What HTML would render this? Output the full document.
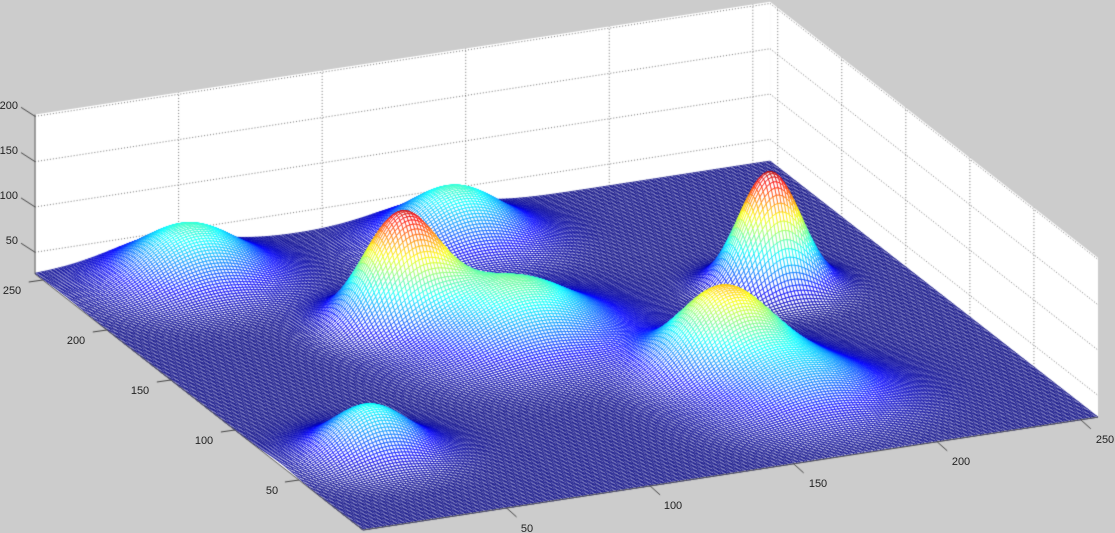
<!DOCTYPE html>
<html><head><meta charset="utf-8">
<style>
html,body{margin:0;padding:0;background:#cccccc;}
#w{position:relative;width:1115px;height:533px;overflow:hidden;background:#cccccc;}
canvas{position:absolute;left:0;top:0;}
.l{position:absolute;font:11px "Liberation Sans",Arial,sans-serif;color:#222;white-space:nowrap;transform:translate(-50%,-50%);}
.r{transform:translate(-100%,-50%);}
</style></head><body>
<div id="w">
<canvas id="c" width="1115" height="533"></canvas>
<div class="l r" style="left:18px;top:106px">200</div>
<div class="l r" style="left:18px;top:151px">150</div>
<div class="l r" style="left:18px;top:196px">100</div>
<div class="l r" style="left:18px;top:241px">50</div>
<div class="l" style="left:12px;top:291px">250</div>
<div class="l" style="left:76px;top:341px">200</div>
<div class="l" style="left:140px;top:391px">150</div>
<div class="l" style="left:204px;top:441px">100</div>
<div class="l" style="left:272px;top:491px">50</div>
<div class="l" style="left:527px;top:529px">50</div>
<div class="l" style="left:673px;top:506px">100</div>
<div class="l" style="left:818px;top:484px">150</div>
<div class="l" style="left:961px;top:462px">200</div>
<div class="l" style="left:1105px;top:440px">250</div>
</div>
<script>
var c=document.getElementById('c'),g=c.getContext('2d');
function P(x,y,h){return [363+2.871*x-1.281*y,530-0.441*x-y-0.906*h];}
function inv(sx,sy,h){var a=sx-363,b=530-(sy+0.906*h);var x=(a+1.281*b)/3.436;return [x,b-0.441*x];}
var B=[[770,172,128,10],[400,222,112,12],[515,280,64,21],[455,188,58,16],[190,226,58,17],[370,406,52,13],[722,292,85,15],[800,360,42,19]];
var bumps=B.map(function(b){var p=inv(b[0],b[1],b[2]);return [p[0],p[1],b[2],b[3]];});
function H(x,y){var s=0;for(var i=0;i<bumps.length;i++){var b=bumps[i],dx=x-b[0],dy=y-b[1];s+=b[2]*Math.exp(-(dx*dx+dy*dy)/(2*b[3]*b[3]));}return s;}
function cl(v){return Math.max(0,Math.min(1,v));}
function jet(t){t=cl(t);var r=cl(1.5-Math.abs(4*t-3)),gg=cl(1.5-Math.abs(4*t-2)),b=cl(1.5-Math.abs(4*t-1));return 'rgb('+(r*255|0)+','+(gg*255|0)+','+(b*255|0)+')';}
function poly(pts,fill,stroke){g.beginPath();g.moveTo(pts[0][0],pts[0][1]);for(var i=1;i<pts.length;i++)g.lineTo(pts[i][0],pts[i][1]);g.closePath();if(fill){g.fillStyle=fill;g.fill();}if(stroke){g.strokeStyle=stroke;g.stroke();}}
function line(a,b,col,w,dash){g.beginPath();g.setLineDash(dash||[]);g.strokeStyle=col;g.lineWidth=w;g.moveTo(a[0],a[1]);g.lineTo(b[0],b[1]);g.stroke();g.setLineDash([]);}
var T=176;
poly([P(0,256,0),P(256,256,0),P(256,256,T),P(0,256,T)],'#fff');
poly([P(256,256,0),P(256,0,0),P(256,0,T),P(256,256,T)],'#fff');
poly([P(0,0,0),P(256,0,0),P(256,256,0),P(0,256,0)],'#fff');
[24,74,124,174].forEach(function(h){line(P(0,256,h),P(256,256,h),'#777',1,[1,2]);line(P(256,256,h),P(256,0,h),'#777',1,[1,2]);});
[50,100,150,200,250].forEach(function(v){line(P(v,256,0),P(v,256,T),'#777',1,[1,2]);line(P(256,v,0),P(256,v,T),'#777',1,[1,2]);});
var N=220,st=256/N,Z=[];
for(var i=0;i<=N;i++){Z[i]=[];for(var j=0;j<=N;j++)Z[i][j]=H(i*st,j*st);}
var Q=[];
for(var i=0;i<N;i++)for(var j=0;j<N;j++)Q.push([i,j,0.441*(i+0.5)+(j+0.5)]);
Q.sort(function(a,b){return b[2]-a[2];});
g.lineWidth=0.75;
for(var k=0;k<Q.length;k++){var i=Q[k][0],j=Q[k][1];
var a=P(i*st,j*st,Z[i][j]),b=P((i+1)*st,j*st,Z[i+1][j]),cc=P((i+1)*st,(j+1)*st,Z[i+1][j+1]),d=P(i*st,(j+1)*st,Z[i][j+1]);
var hv=(Z[i][j]+Z[i+1][j]+Z[i+1][j+1]+Z[i][j+1])/4;
poly([a,b,cc,d],'#fff',jet(hv/135));}
line(P(0,256,0),P(0,256,T),'#555',1);
line(P(0,0,0),P(0,256,0),'#555',1);
line(P(0,0,0),P(256,0,0),'#555',1);
[24,74,124,174].forEach(function(h){var p=P(0,256,h);line(p,[p[0]-14,p[1]-9],'#444',1);});
[50,100,150,200,250].forEach(function(v){var p=P(0,v,0);line(p,[p[0]-14,p[1]+2],'#444',1);var q=P(v,0,0);line(q,[q[0]+10,q[1]+9],'#444',1);});
</script>
</body></html>
